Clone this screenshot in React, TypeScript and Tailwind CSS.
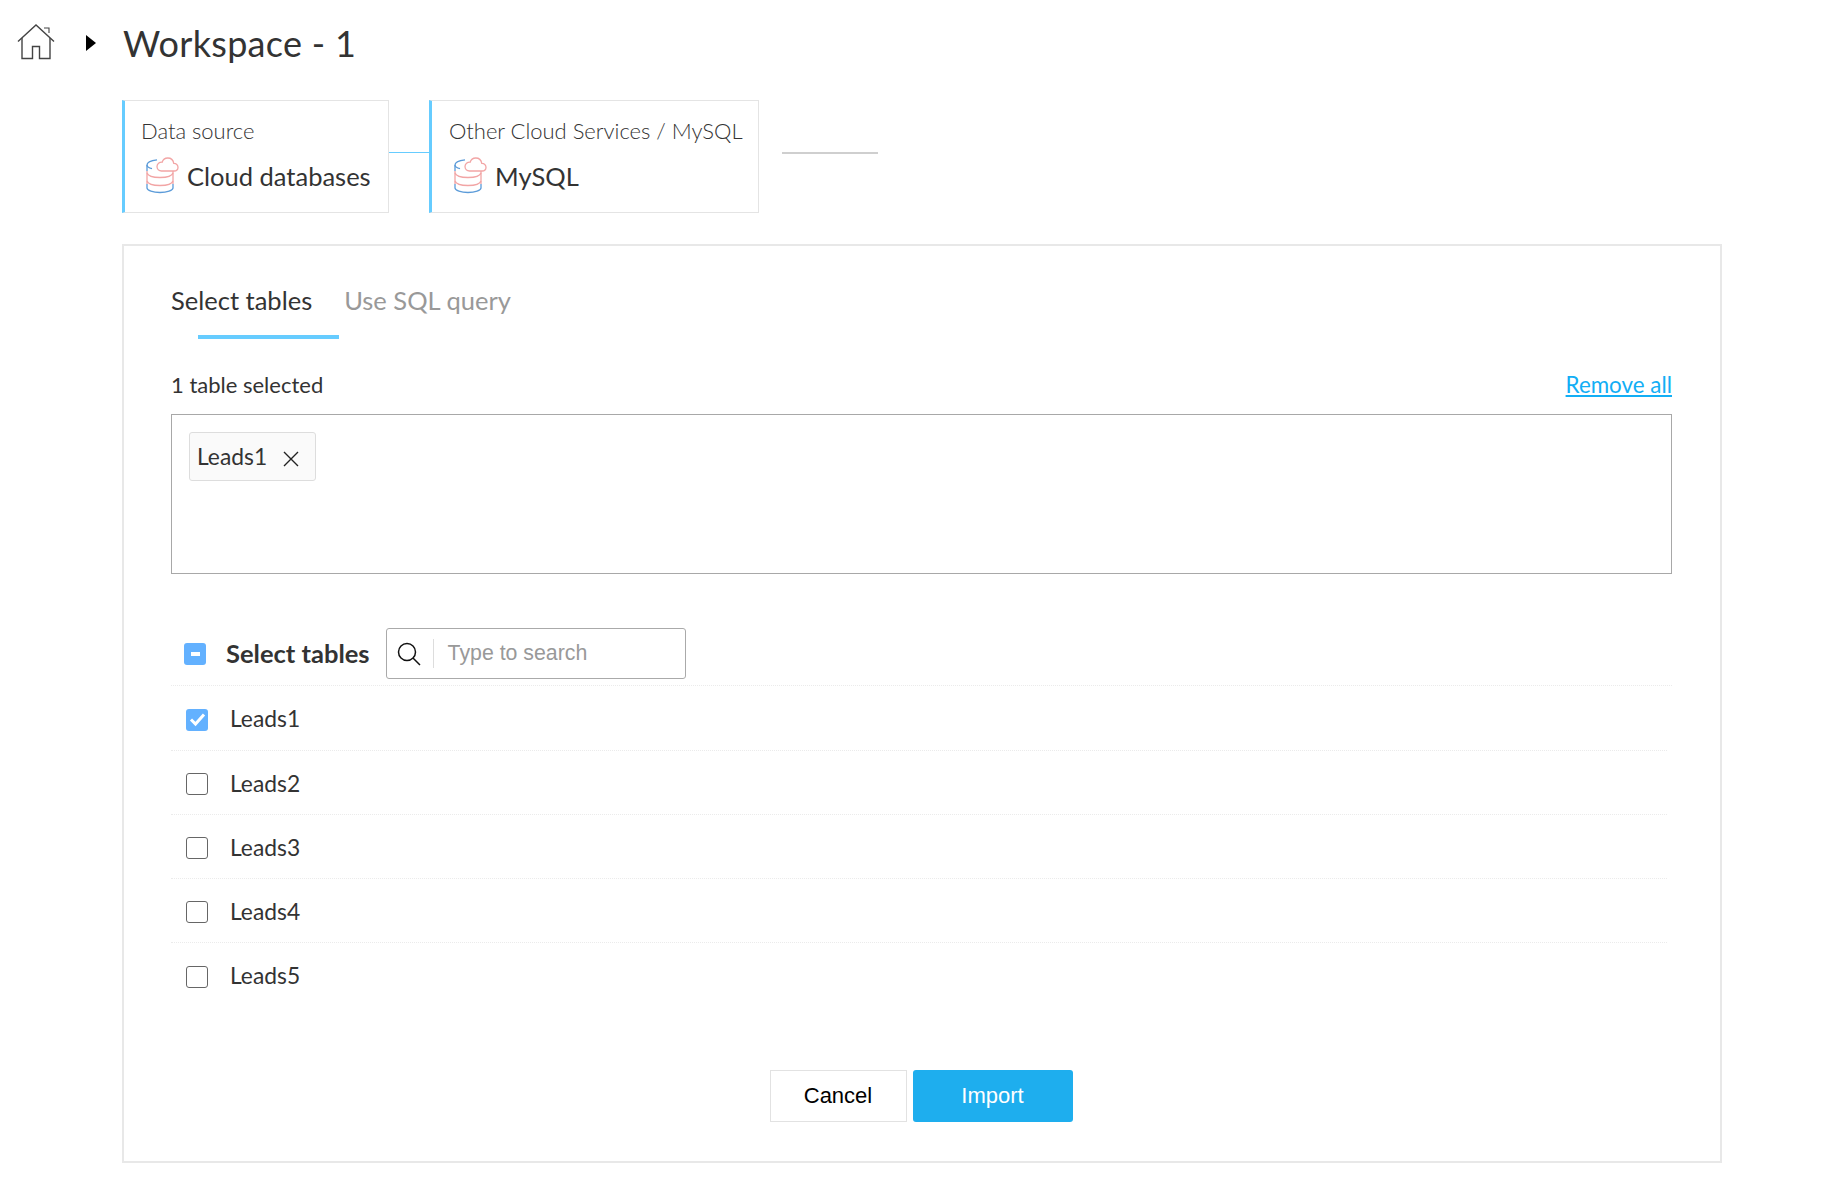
import React from "react";

const lato = "font-['Lato',sans-serif]";

function HomeIcon() {
  return (
    <svg width="38" height="36" viewBox="0 0 38 36" fill="none" stroke="#444" strokeWidth="1.4">
      <path d="M1 17.500 19 1l18 16.500" />
      <path d="M5 14v20.500h10.500V22.500h7v12H33V14" />
      <path d="M27 4h5v5" strokeWidth="1.1" />
    </svg>
  );
}

function DbIcon() {
  return (
    <svg width="33" height="37" viewBox="0 0 33 37" fill="none" strokeWidth="1.3" className="shrink-0">
      <path d="M11 2.800C5 3.500 1 5.500 1 8v6" stroke="#5b9bd9" />
      <path d="M1 8c0 1.600 2 3 5 3.700" stroke="#5b9bd9" />
      <path d="M27 14v-1" stroke="#5b9bd9" />
      <path d="M1 27v4c0 2.500 6 4.500 13 4.500s13-2 13-4.500v-4" stroke="#5b9bd9" />
      <path d="M1 14v13M27 14v13" stroke="#f2a5a5" />
      <path d="M1 16c1 3 7 4.500 13 4.500S26 19 27 16M1 24c1 3 7 4.500 13 4.500S26 27 27 24" stroke="#f2a5a5" />
      <path d="M15.500 14H28c2.500 0 4-1.800 4-3.800 0-2.300-1.800-3.900-4.200-3.800C27.200 3.300 24.800 1 21.800 1c-2.800 0-5 1.900-5.600 4.200-2.800-.2-5.200 1.800-5.200 4.400 0 2.500 2 4.400 4.500 4.400Z" stroke="#f2a5a5" fill="#fff" />
    </svg>
  );
}

function Card({ label, title, box }: { label: string; title: string; box: string }) {
  return (
    <div className={`h-[113px] ${box} border border-[#e4e4e4] border-l-[3px] border-l-[#66ccff] pt-[15px] bg-white`}>
      <div className="text-[22px] leading-[30px] font-light tracking-[-0.02px] text-[#333] whitespace-nowrap">{label}</div>
      <div className="mt-[11px] flex items-start gap-[8px] pl-[5px]">
        <DbIcon />
        <span className="mt-[1px] text-[25.5px] leading-[36px] text-[#333] whitespace-nowrap">{title}</span>
      </div>
    </div>
  );
}

function Check({ state }: { state: "on" | "off" }) {
  if (state === "on") {
    return (
      <span className="flex h-[22px] w-[22px] items-center justify-center rounded-[3px] bg-[#63b1ff]">
        <svg width="17" height="15" viewBox="0 0 17 15" fill="none" stroke="#fff" strokeWidth="3">
          <path d="M2 7.500 6.500 12 15 2.500" />
        </svg>
      </span>
    );
  }
  return <span className="block h-[22px] w-[22px] rounded-[3px] border border-[#666] bg-white" />;
}

function Row({ name, state, height, last }: { name: string; state: "on" | "off"; height: string; last?: boolean }) {
  return (
    <div className={`mr-[5px] flex ${height} items-center pl-[15px] pt-[3px] ${last ? "" : "border-b border-dotted border-[#ebebeb]"}`}>
      <Check state={state} />
      <span className="mb-[2px] ml-[22px] text-[22.8px] text-[#333]">{name}</span>
    </div>
  );
}

export default function App() {
  return (
    <div className={`${lato} min-h-[1188px] bg-white pt-[20px] text-[#333]`}>
      <header className="flex h-[44px] items-center pl-[17px]">
        <HomeIcon />
        <svg width="10" height="16" viewBox="0 0 10 16" className="ml-[31px] mt-[2px]"><path d="M0 0l10 8-10 8Z" fill="#000" /></svg>
        <h1 className="ml-[27px] mt-[2px] text-[36px] leading-[44px] tracking-[0.3px] text-[#333]">Workspace - 1</h1>
      </header>

      <div className="ml-[122px] mr-[102px]">
        <div className="mt-[36px] flex items-start">
          <Card label="Data source" title="Cloud databases" box="w-[267px] pl-[16px]" />
          <div className="mt-[52px] h-[1px] w-[40px] bg-[#66ccff]" />
          <Card label="Other Cloud Services / MySQL" title="MySQL" box="w-[330px] pl-[17px]" />
          <div className="ml-[23px] mt-[52px] h-[2px] w-[96px] bg-[#cfcfcf]" />
        </div>

        <main className="mt-[31px] h-[919px] border-2 border-[#e8e8e8] pl-[47px] pr-[48px] pt-[31px]">
          <div className="flex items-start">
            <div className="relative h-[61px]">
              <span className="text-[25.5px] leading-[46px] text-[#333]">Select tables</span>
              <div className="absolute left-[27px] top-[58px] h-[4px] w-[141px] bg-[#66ccff]" />
            </div>
            <span className="ml-[32px] text-[25.5px] leading-[46px] text-[#999]">Use SQL query</span>
          </div>

          <div className="mt-[31px] flex items-center justify-between">
            <span className="text-[22px] leading-[32px]">1 table selected</span>
            <a className="text-[22.4px] leading-[32px] text-[#12aef5] underline">Remove all</a>
          </div>

          <div className="mt-[13px] h-[160px] border border-[#a8a8a8] pl-[17px] pt-[17px]">
            <div className="flex h-[49px] w-[127px] items-center rounded-[3px] border border-[#ddd] bg-[#fafafa] pl-[7px]">
              <span className="text-[22.8px]">Leads1</span>
              <svg width="16" height="16" viewBox="0 0 16 16" fill="none" stroke="#222" strokeWidth="1.400" className="ml-[16px] mt-[4px]">
                <path d="M1 1l14 14M15 1 1 15" />
              </svg>
            </div>
          </div>

          <div className="mt-[54px] flex h-[58px] items-start border-b border-dotted border-[#ebebeb] pl-[13px]">
            <span className="mt-[15px] flex h-[22px] w-[22px] items-center justify-center rounded-[3px] bg-[#63b1ff]">
              <span className="h-[4px] w-[9px] bg-white" />
            </span>
            <span className="ml-[20px] mt-[8px] text-[25.5px] font-bold leading-[34px]">Select tables</span>
            <div className="ml-[16px] flex h-[51px] w-[300px] items-center rounded-[3px] border border-[#aaa] bg-white">
              <svg width="24" height="24" viewBox="0 0 24 24" fill="none" stroke="#111" strokeWidth="1.500" className="ml-[10px]">
                <circle cx="10" cy="10" r="8.500" />
                <path d="m16 16 7 7" />
              </svg>
              <span className="ml-[12px] h-[29px] w-[1px] bg-[#ddd]" />
              <span className="ml-[14px] font-['Liberation_Sans',sans-serif] text-[21.3px] text-[#999]">Type to search</span>
            </div>
          </div>

          <Row name="Leads1" state="on" height="h-[65px]" />
          <Row name="Leads2" state="off" height="h-[64px]" />
          <Row name="Leads3" state="off" height="h-[64px]" />
          <Row name="Leads4" state="off" height="h-[64px]" />
          <Row name="Leads5" state="off" height="h-[64px]" last />

          <div className="mt-[63px] flex justify-center gap-[6px] pr-[1px] font-['Liberation_Sans',sans-serif] text-[22px]">
            <button className="h-[52px] w-[137px] border border-[#e2e2e2] bg-white pb-[2px] text-black">Cancel</button>
            <button className="h-[52px] w-[160px] rounded-[3px] bg-[#1eaeee] pb-[2px] text-white">Import</button>
          </div>
        </main>
      </div>
    </div>
  );
}
